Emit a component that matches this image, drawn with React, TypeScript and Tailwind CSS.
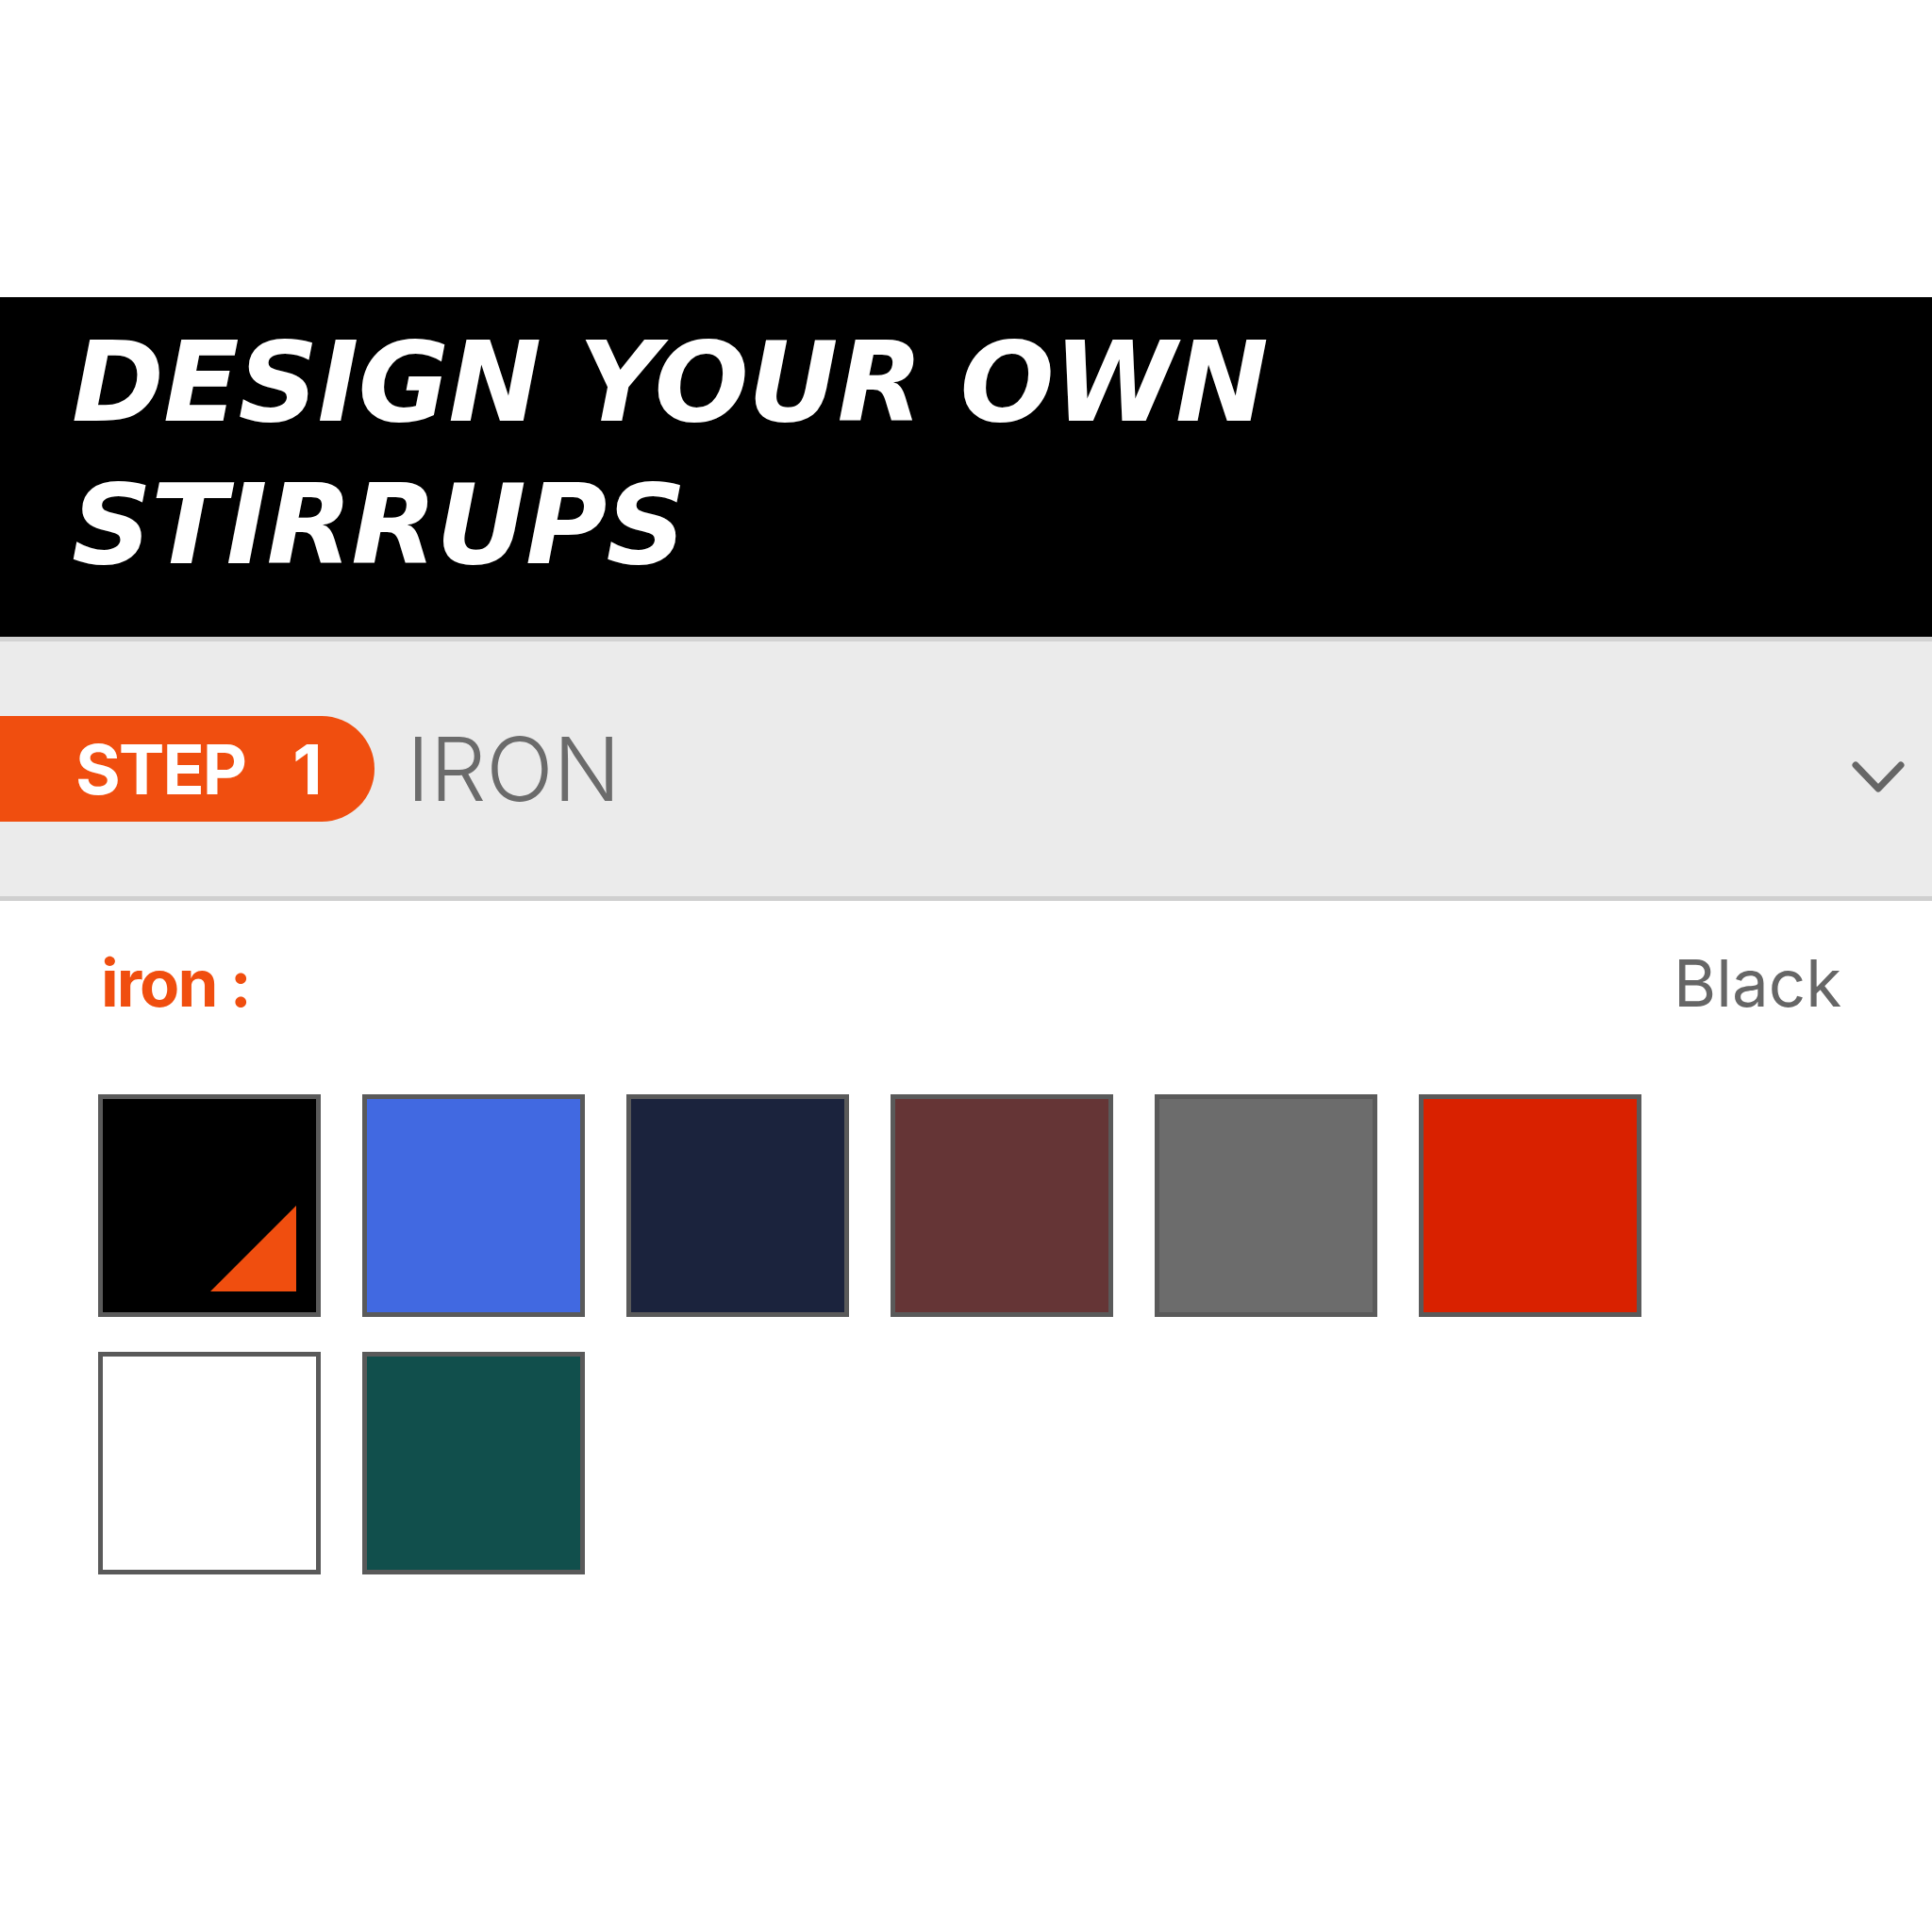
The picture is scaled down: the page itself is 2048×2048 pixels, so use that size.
import React from "react";

const swatches = [
  { name: "Black", color: "bg-[#000000]", selected: true },
  { name: "Blue", color: "bg-[#4169e1]" },
  { name: "Navy", color: "bg-[#1b233d]" },
  { name: "Brown", color: "bg-[#653536]" },
  { name: "Grey", color: "bg-[#6c6c6c]" },
  { name: "Red", color: "bg-[#d92100]" },
  { name: "White", color: "bg-[#ffffff]" },
  { name: "Green", color: "bg-[#114f4c]" },
];

export default function App() {
  return (
    <div className="w-[2048px] h-[2048px] bg-white font-['Inter',sans-serif]">
      <div className="h-[315px]" />
      <div className="bg-black h-[360px] pt-[15px] pl-[76px]">
        <h1 className="text-white font-bold italic font-['DejaVu_Sans',sans-serif] text-[118px] leading-[151px] tracking-[-1px]">
          DESIGN YOUR OWN
          <br />
          STIRRUPS
        </h1>
      </div>
      <div className="h-[280px] bg-[#ebebeb] border-t-[5px] border-t-[#d2d2d2] border-b-[5px] border-b-[#cfcfcf] flex items-center">
        <div className="h-[112px] w-[397px] bg-[#f04e0f] rounded-r-full flex items-center pl-[80px] gap-[50px] text-white font-bold text-[73px] leading-none">
          <span className="tracking-[-2px]">STEP</span>
          <span>1</span>
        </div>
        <span className="ml-[34px] text-[94px] font-light text-[#6b6b6b] leading-none tracking-[0px]">IRON</span>
        <div className="ml-auto mr-[29px] mt-[18px]">
          <svg width="56" height="36" viewBox="0 0 56 36" fill="none">
            <path d="M4 5 L28 30 L52 5" stroke="#666666" strokeWidth="7" strokeLinecap="round" strokeLinejoin="round" />
          </svg>
        </div>
      </div>
      <div className="pl-[104px] pr-[96px] pt-[53px]">
        <div className="flex justify-between items-baseline leading-none text-[69px]">
          <span className="font-bold text-[#f04e0f] pl-[3px] tracking-[-2px]">iron :</span>
          <span className="text-[#666666] font-normal">Black</span>
        </div>
        <div className="mt-[83px] flex flex-wrap gap-x-[44px] gap-y-[37px]">
          {swatches.map((s) => (
            <div
              key={s.name}
              className={`relative w-[236px] h-[236px] border-[5px] border-[#5a5a5a] ${s.color}`}
            >
              {s.selected && (
                <svg
                  className="absolute right-[21px] bottom-[22px]"
                  width="91"
                  height="91"
                  viewBox="0 0 91 91"
                >
                  <polygon points="0,91 91,91 91,0" fill="#f04e0f" />
                </svg>
              )}
            </div>
          ))}
        </div>
      </div>
    </div>
  );
}
